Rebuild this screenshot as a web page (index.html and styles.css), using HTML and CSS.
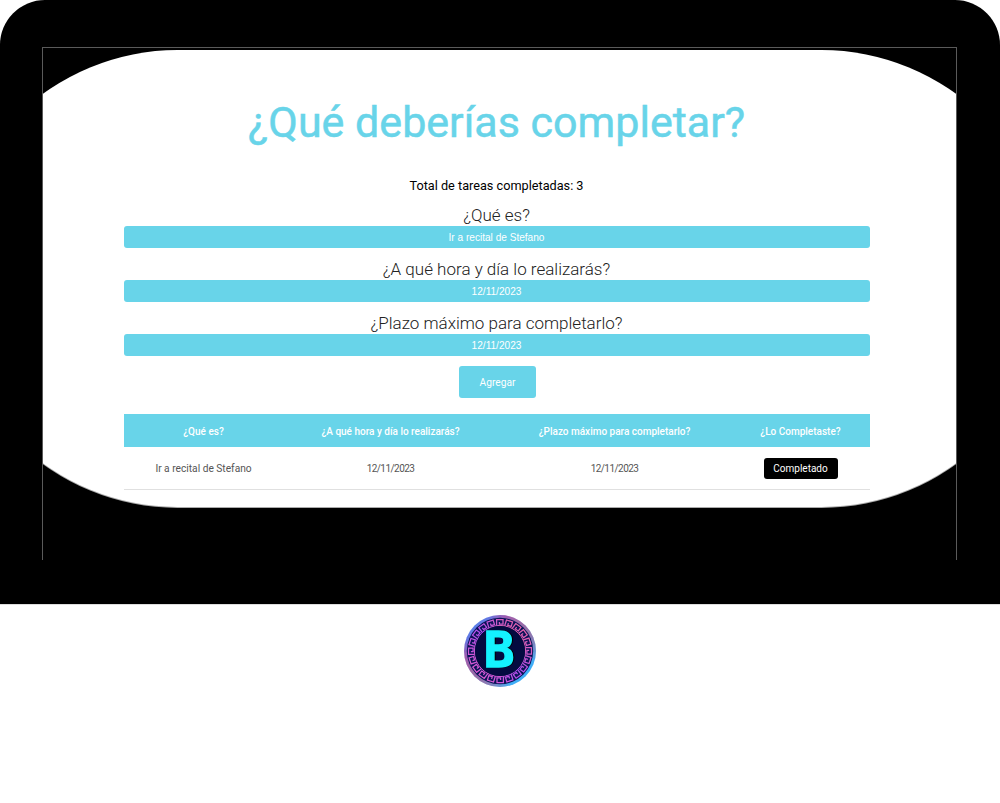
FILE: index.html
```html
<!DOCTYPE html>
<html lang="es">
<head>
<meta charset="utf-8">
<title>¿Qué deberías completar?</title>
<link rel="stylesheet" href="styles.css">
</head>
<body>
<div class="laptop">
  <div class="screen">
    <div class="pill">
      <main class="content">
        <h1 class="title">¿Qué deberías completar?</h1>
        <p class="total">Total de tareas completadas: 3</p>
        <form class="form">
          <label class="label">¿Qué es?</label>
          <input class="field" type="text" value="Ir a recital de Stefano">
          <label class="label">¿A qué hora y día lo realizarás?</label>
          <input class="field" type="text" value="12/11/2023">
          <label class="label">¿Plazo máximo para completarlo?</label>
          <input class="field" type="text" value="12/11/2023">
          <button class="add" type="button">Agregar</button>
        </form>
        <table class="tasks">
          <thead>
            <tr>
              <th class="c1">¿Qué es?</th>
              <th class="c2">¿A qué hora y día lo realizarás?</th>
              <th class="c3">¿Plazo máximo para completarlo?</th>
              <th class="c4">¿Lo Completaste?</th>
            </tr>
          </thead>
          <tbody>
            <tr>
              <td>Ir a recital de Stefano</td>
              <td class="date">12/11/2023</td>
              <td class="date">12/11/2023</td>
              <td><button class="done" type="button">Completado</button></td>
            </tr>
          </tbody>
        </table>
      </main>
    </div>
  </div>
</div>
<div class="logo-row">
  <svg class="logo" width="74" height="74" viewBox="0 0 74 74" role="img" aria-label="Logo">
    <defs>
      <linearGradient id="ring" x1="0" y1="0" x2="1" y2="1">
        <stop offset="0" stop-color="#3d9bf5"/>
        <stop offset=".3" stop-color="#7a63d8"/>
        <stop offset=".5" stop-color="#3f8ff0"/>
        <stop offset=".75" stop-color="#3fb0f8"/>
        <stop offset="1" stop-color="#3fa8f5"/>
      </linearGradient>
      <linearGradient id="ring2" x1="0" y1="1" x2="1" y2="0">
        <stop offset="0" stop-color="#e0506a"/>
        <stop offset=".35" stop-color="#e0506a" stop-opacity="0"/>
        <stop offset=".65" stop-color="#e0506a" stop-opacity="0"/>
        <stop offset="1" stop-color="#e0506a"/>
      </linearGradient>
      <linearGradient id="key" x1="1" y1="0" x2="0" y2="1">
        <stop offset="0" stop-color="#ff6a8a"/>
        <stop offset=".5" stop-color="#b050f0"/>
        <stop offset="1" stop-color="#f060c0"/>
      </linearGradient>
      <path id="k" d="M33.6 11.5v-6h6.4v4.6h-3.6v-2.2" fill="none" stroke="#fff" stroke-width="1.25"/>
      <mask id="keys">
        <use href="#k"/>
        <use href="#k" transform="rotate(18 37 37)"/>
        <use href="#k" transform="rotate(36 37 37)"/>
        <use href="#k" transform="rotate(54 37 37)"/>
        <use href="#k" transform="rotate(72 37 37)"/>
        <use href="#k" transform="rotate(90 37 37)"/>
        <use href="#k" transform="rotate(108 37 37)"/>
        <use href="#k" transform="rotate(126 37 37)"/>
        <use href="#k" transform="rotate(144 37 37)"/>
        <use href="#k" transform="rotate(162 37 37)"/>
        <use href="#k" transform="rotate(180 37 37)"/>
        <use href="#k" transform="rotate(198 37 37)"/>
        <use href="#k" transform="rotate(216 37 37)"/>
        <use href="#k" transform="rotate(234 37 37)"/>
        <use href="#k" transform="rotate(252 37 37)"/>
        <use href="#k" transform="rotate(270 37 37)"/>
        <use href="#k" transform="rotate(288 37 37)"/>
        <use href="#k" transform="rotate(306 37 37)"/>
        <use href="#k" transform="rotate(324 37 37)"/>
        <use href="#k" transform="rotate(342 37 37)"/>
      </mask>
    </defs>
    <circle cx="37" cy="37" r="36" fill="url(#ring)"/>
    <circle cx="37" cy="37" r="36" fill="url(#ring2)"/>
    <circle cx="37" cy="37" r="33.2" fill="#0b1257"/>
    <circle cx="37" cy="37" r="33" fill="url(#key)" mask="url(#keys)"/>
    <circle cx="37" cy="37" r="25.6" fill="none" stroke="url(#key)" stroke-width="1"/>
    <circle cx="37" cy="37" r="25" fill="#040b40"/>
    <text class="logo-b" x="0" y="0" text-anchor="middle" transform="translate(36 52.5) scale(1.02 1)">B</text>
  </svg>
</div>
</body>
</html>
```
FILE: styles.css
```css
* { box-sizing: border-box; }
html, body { margin: 0; padding: 0; background: #fff; }
body { font-family: Roboto, "Liberation Sans", sans-serif; overflow: hidden; }

.laptop {
  height: 604px;
  background: #000;
  border-radius: 45px 45px 0 0;
  padding: 47px 43px 44px 42px;
  box-shadow: 0 1px 0 #ddd;
}
.screen {
  height: 513px;
  border: 1px solid #5a5a5a;
  border-bottom: 0;
  padding-top: 2px;
  overflow: hidden;
}
.pill {
  height: 457px;
  margin: 0 -94px;
  background: #fff;
  border-radius: 229px;
  box-shadow: 0 1px 0 #aaa;
  display: flex;
  justify-content: center;
  padding-right: 6px;
  overflow: hidden;
}
.content { width: 746px; display: flex; flex-direction: column; align-items: center; }

.title {
  margin: 44px 0 0;
  font-size: 43px;
  line-height: 56px;
  font-weight: 400;
  color: #68d4e9;
  -webkit-text-stroke: .5px #68d4e9;
  white-space: nowrap;
}
.total {
  margin: 27px 0 0;
  font-size: 12.7px;
  line-height: 18px;
  font-weight: 400;
  color: #000;
}
.form { width: 100%; display: flex; flex-direction: column; align-items: center; margin-top: 10px; }
.label {
  font-size: 17px;
  line-height: 20px;
  font-weight: 300;
  color: #222;
  height: 21px;
}
.field {
  width: 100%;
  height: 22px;
  border: 0;
  border-radius: 3px;
  background: #68d4e9;
  color: #fff;
  font: 10.1px "Liberation Sans", Arial, sans-serif;
  text-align: center;
  padding: 0;
  margin-bottom: 11px;
}
.add {
  margin: -1px 0 0 2px;
  width: 77px;
  height: 32px;
  border: 0;
  border-radius: 3px;
  background: #68d4e9;
  color: #fff;
  font-family: Roboto, sans-serif;
  font-size: 10.2px;
  padding: 0;
}
.tasks {
  width: 100%;
  margin-top: 16px;
  border-collapse: collapse;
  table-layout: fixed;
}
.c1 { width: 160px; }
.c2 { width: 214px; }
.c3 { width: 234px; }
.c4 { width: 138px; }
.tasks th {
  height: 33px;
  padding: 1px 0 0;
  background: #68d4e9;
  color: #fff;
  font-size: 10px;
  font-weight: 500;
  text-align: center;
}
.tasks td {
  height: 42px;
  padding: 1px 0 0;
  font-size: 10.2px;
  color: #555;
  text-align: center;
  border-bottom: 1px solid #e0e0e0;
}
.tasks .date { font-size: 10px; letter-spacing: -.55px; }
.done {
  width: 74px;
  height: 21px;
  border: 0;
  border-radius: 3px;
  background: #000;
  color: #fff;
  font-family: Roboto, sans-serif;
  font-size: 10px;
  padding: 0;
  vertical-align: middle;
}

.logo-row { display: flex; justify-content: center; padding-top: 10px; }
.logo { display: block; }
.logo-b {
  font-family: "DejaVu Sans Mono", monospace;
  font-weight: 700;
  font-size: 50px;
  fill: #14f2ff;
  stroke: #14f2ff;
  stroke-width: 1.4px;
  filter: drop-shadow(1.5px 0 0 #000);
}
```
